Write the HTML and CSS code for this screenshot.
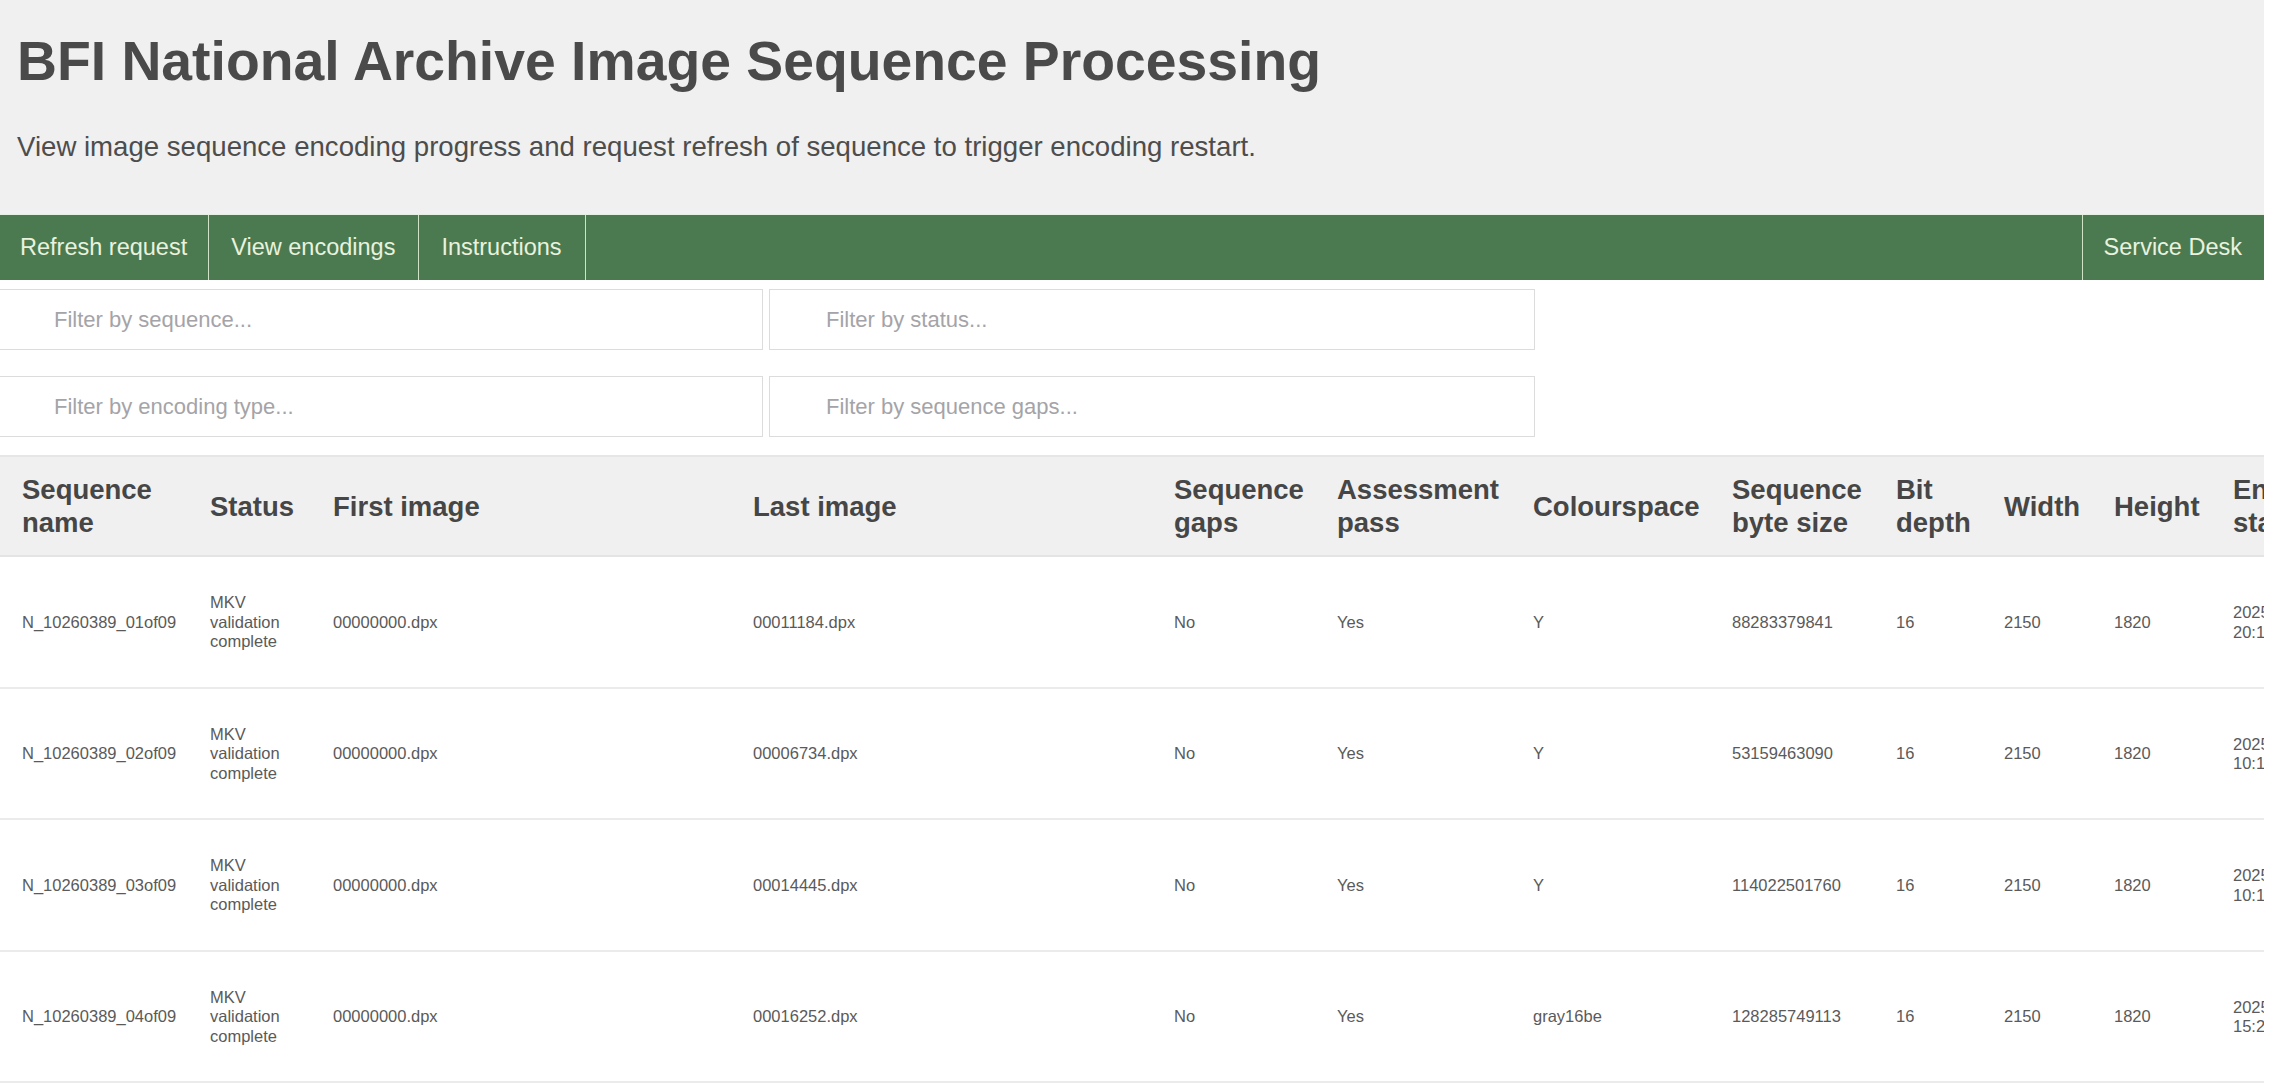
FILE: index.html
```html
<!DOCTYPE html>
<html lang="en">
<head>
<meta charset="utf-8">
<title>BFI National Archive Image Sequence Processing</title>
<link rel="stylesheet" href="styles.css">
</head>
<body>
<div class="page">
  <header class="masthead">
    <h1 class="title">BFI National Archive Image Sequence Processing</h1>
    <p class="lead">View image sequence encoding progress and request refresh of sequence to trigger encoding restart.</p>
  </header>
  <nav class="topnav">
    <a class="nav-item" href="#">Refresh request</a>
    <a class="nav-item nav-wide" href="#">View encodings</a>
    <a class="nav-item nav-wide" href="#">Instructions</a>
    <span class="nav-spacer"></span>
    <a class="nav-item nav-right" href="#">Service Desk</a>
  </nav>
  <div class="filters">
    <input class="filter" type="text" placeholder="Filter by sequence...">
    <input class="filter" type="text" placeholder="Filter by status...">
    <input class="filter" type="text" placeholder="Filter by encoding type...">
    <input class="filter" type="text" placeholder="Filter by sequence gaps...">
  </div>
  <div class="table-wrap">
    <table class="seq-table">
      <colgroup>
        <col class="c-name"><col class="c-status"><col class="c-first"><col class="c-last">
        <col class="c-gaps"><col class="c-pass"><col class="c-colour"><col class="c-size">
        <col class="c-bit"><col class="c-width"><col class="c-height"><col class="c-start">
        <col class="c-end"><col class="c-type"><col class="c-refresh">
      </colgroup>
      <thead>
        <tr>
          <th>Sequence name</th><th>Status</th><th>First image</th><th>Last image</th>
          <th>Sequence gaps</th><th>Assessment pass</th><th>Colourspace</th><th>Sequence byte size</th>
          <th>Bit depth</th><th>Width</th><th>Height</th><th>Encoding start</th>
          <th>Encoding complete</th><th>Encoding type</th><th>Refresh</th>
        </tr>
      </thead>
      <tbody>
        <tr>
          <td>N_10260389_01of09</td><td>MKV validation complete</td><td>00000000.dpx</td><td>00011184.dpx</td>
          <td>No</td><td>Yes</td><td>Y</td><td>88283379841</td>
          <td>16</td><td>2150</td><td>1820</td><td>2025-06-12 20:14:31</td>
          <td>2025-06-13 02:41:09</td><td>RAWcooked</td><td>No</td>
        </tr>
        <tr>
          <td>N_10260389_02of09</td><td>MKV validation complete</td><td>00000000.dpx</td><td>00006734.dpx</td>
          <td>No</td><td>Yes</td><td>Y</td><td>53159463090</td>
          <td>16</td><td>2150</td><td>1820</td><td>2025-06-13 10:12:48</td>
          <td>2025-06-13 14:05:22</td><td>RAWcooked</td><td>No</td>
        </tr>
        <tr>
          <td>N_10260389_03of09</td><td>MKV validation complete</td><td>00000000.dpx</td><td>00014445.dpx</td>
          <td>No</td><td>Yes</td><td>Y</td><td>114022501760</td>
          <td>16</td><td>2150</td><td>1820</td><td>2025-06-14 10:19:02</td>
          <td>2025-06-14 17:33:50</td><td>RAWcooked</td><td>No</td>
        </tr>
        <tr>
          <td>N_10260389_04of09</td><td>MKV validation complete</td><td>00000000.dpx</td><td>00016252.dpx</td>
          <td>No</td><td>Yes</td><td>gray16be</td><td>128285749113</td>
          <td>16</td><td>2150</td><td>1820</td><td>2025-06-15 15:27:40</td>
          <td>2025-06-15 23:58:16</td><td>RAWcooked</td><td>No</td>
        </tr>
        <tr>
          <td>N_10260389_05of09</td><td>MKV validation complete</td><td>00000000.dpx</td><td>00012907.dpx</td>
          <td>No</td><td>Yes</td><td>Y</td><td>101884021350</td>
          <td>16</td><td>2150</td><td>1820</td><td>2025-06-16 09:03:11</td>
          <td>2025-06-16 15:47:29</td><td>RAWcooked</td><td>No</td>
        </tr>
      </tbody>
    </table>
  </div>
</div>
</body>
</html>
```
FILE: styles.css
```css
html, body {
  margin: 0;
  padding: 0;
  background: #ffffff;
}

body {
  font-family: "Liberation Sans", Arial, sans-serif;
  color: #555555;
  overflow: hidden;
}

.page {
  margin-right: 5px;
  overflow: hidden;
}

.masthead {
  background: #f0f0f0;
  padding: 30px 0 51px 17px;
}

.title {
  margin: 0;
  font-size: 55.3px;
  line-height: 63px;
  font-weight: bold;
  color: #4a4a4a;
  white-space: nowrap;
}

.lead {
  margin: 38px 0 0 0;
  font-size: 27.6px;
  line-height: 32px;
  color: #4d4d4d;
  white-space: nowrap;
}

.topnav {
  display: flex;
  height: 66px;
  background: #4c7a50;
  border-top: 1px solid #e4f1e1;
  box-sizing: border-box;
}

.nav-item {
  display: block;
  padding: 0 21px 0 20px;
  font-size: 23.5px;
  line-height: 65px;
  color: #e8f2de;
  text-decoration: none;
  border-right: 1px solid #cfe3c6;
  white-space: nowrap;
}

.nav-wide {
  padding: 0 23px 0 22px;
}

.nav-spacer {
  flex: 1;
}

.nav-right {
  border-right: none;
  border-left: 1px solid #cfe3c6;
  padding: 0 22px 0 21px;
}

.filters {
  display: grid;
  grid-template-columns: 766px 766px;
  column-gap: 6px;
  row-gap: 26px;
  margin: 9px 0 0 -3px;
}

.filter {
  box-sizing: border-box;
  height: 61px;
  margin: 0;
  padding: 0 10px 0 56px;
  border: 1px solid #dcdcdc;
  font-family: "Liberation Sans", Arial, sans-serif;
  font-size: 22px;
  color: #555555;
  background: #ffffff;
  outline: none;
}

.filter::placeholder {
  color: #a4a4a8;
}

.table-wrap {
  margin-top: 18px;
}

.seq-table {
  table-layout: fixed;
  width: 2712px;
  border-collapse: collapse;
}

.c-name { width: 199px; }
.c-status { width: 123px; }
.c-first { width: 420px; }
.c-last { width: 421px; }
.c-gaps { width: 163px; }
.c-pass { width: 196px; }
.c-colour { width: 199px; }
.c-size { width: 164px; }
.c-bit { width: 108px; }
.c-width { width: 110px; }
.c-height { width: 119px; }
.c-start { width: 150px; }
.c-end { width: 180px; }
.c-type { width: 160px; }
.c-refresh { width: 100px; }

.seq-table th {
  background: #f0f0f0;
  border-top: 2px solid #e6e6e6;
  border-bottom: 2px solid #e4e4e4;
  padding: 16px 11px 15.5px 11px;
  text-align: left;
  vertical-align: middle;
  font-size: 27.5px;
  line-height: 33.4px;
  font-weight: bold;
  color: #464646;
}

.seq-table td {
  border-bottom: 2px solid #ebebeb;
  padding: 36px 11px 35px 11px;
  vertical-align: middle;
  font-size: 16.5px;
  line-height: 19.5px;
  color: #5a5a5a;
}

.seq-table th:first-child,
.seq-table td:first-child {
  padding-left: 22px;
}
```
